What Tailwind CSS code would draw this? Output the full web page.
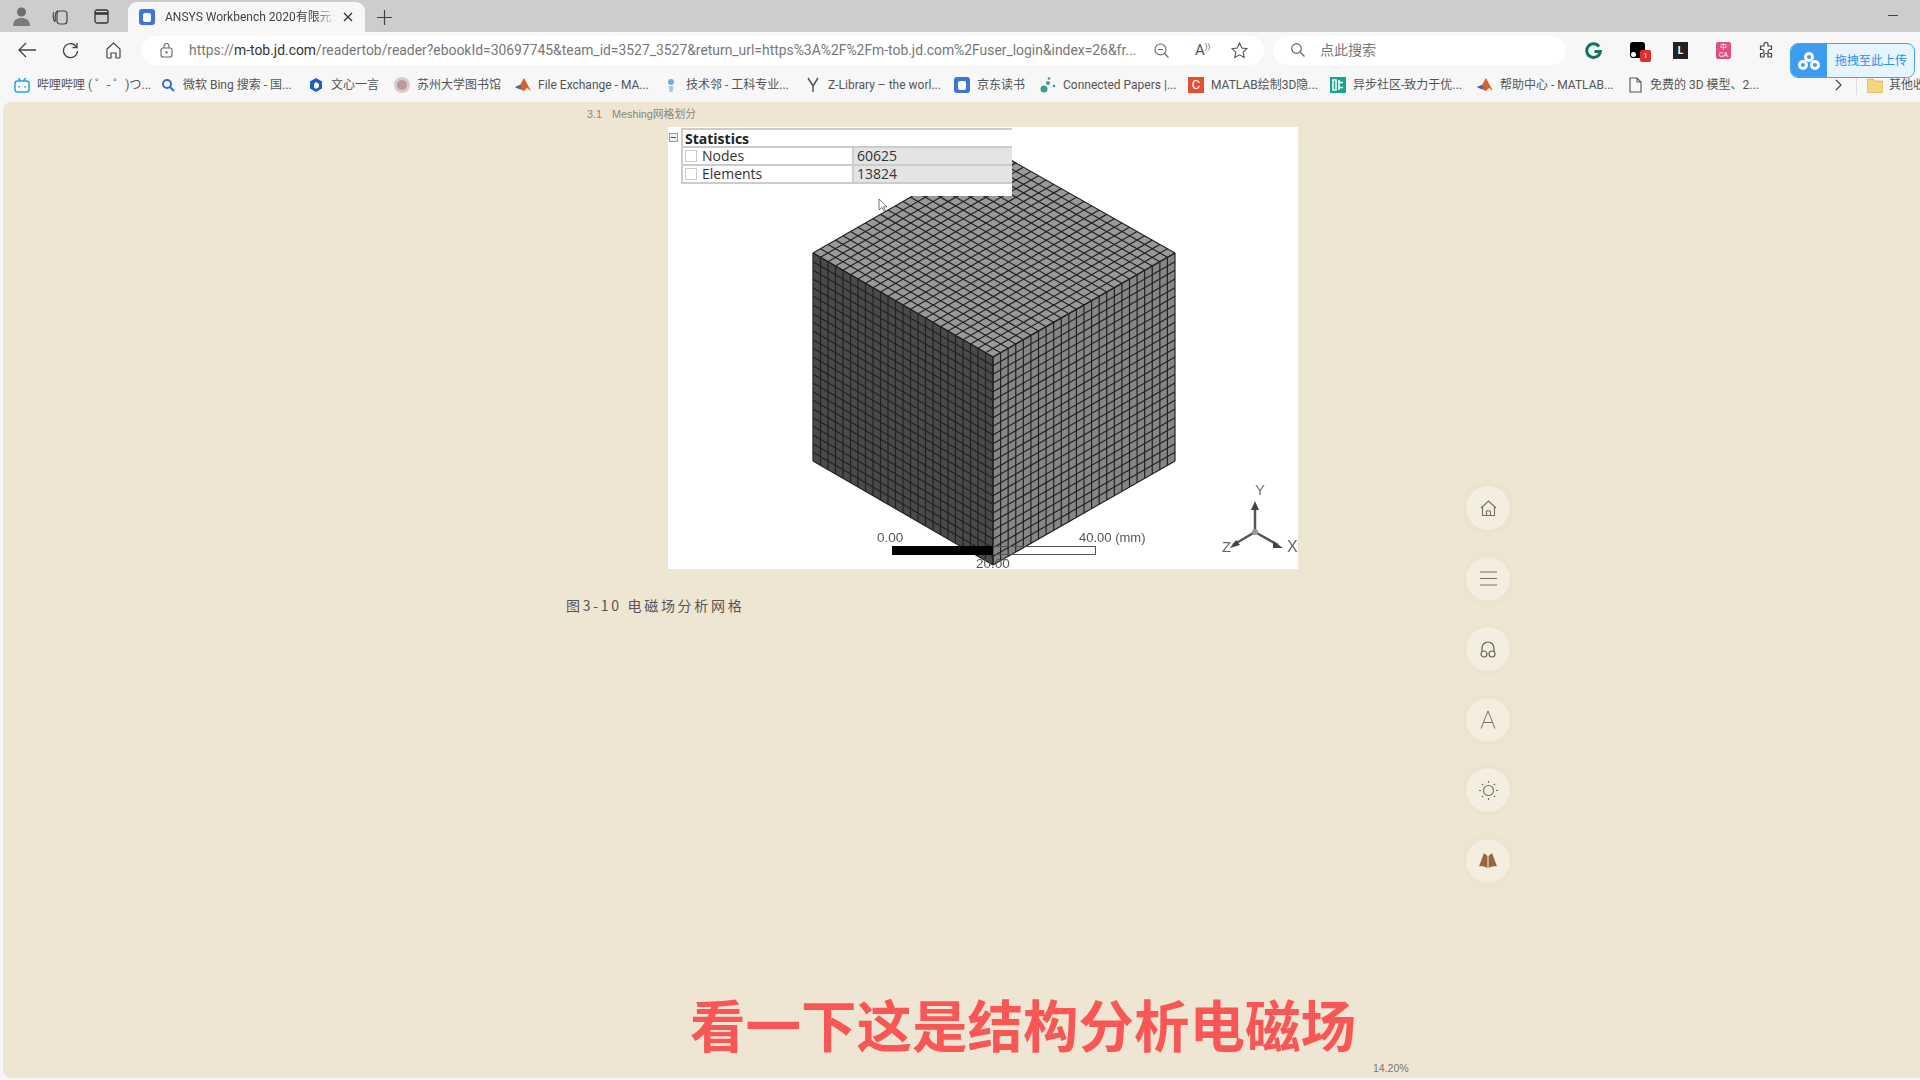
<!DOCTYPE html>
<html lang="zh">

<head>
  <meta charset="UTF-8">
  <title>ANSYS Workbench 2020</title>
  <script src="https://cdn.jsdelivr.net/npm/@tailwindcss/browser@4"></script>
</head>

<body class="w-[1920px] h-[1080px] overflow-hidden bg-[#f7f7f7] font-['Roboto','Noto_Sans_CJK_SC',sans-serif] text-[#444] relative">

  <!-- tab strip -->
  <div class="h-[32px] bg-[#cdcdcd] flex items-end relative">
    <div class="w-[128px] h-[32px] flex items-center text-[#444] shrink-0">
      <svg class="ml-[12px] w-[19px] h-[20px]" viewBox="0 0 19 20"><circle cx="9.5" cy="6" r="4.5" fill="#6f6f6f"/><path d="M1 20c0-6 4-8 8.500-8s8.500 2 8.500 8z" fill="#7b7b7b"/></svg>
      <svg class="ml-[20px] w-[17px] h-[17px]" viewBox="0 0 17 17" fill="none" stroke="#444" stroke-width="1.200"><rect x="6" y="3" width="10" height="13" rx="3"/><path d="M4 14C2 12 1.500 6 3 4M7 2.500C5 3 3.500 7 4.500 13"/></svg>
      <svg class="ml-[26px] w-[15px] h-[15px]" viewBox="0 0 15 15" fill="none" stroke="#333" stroke-width="1.300"><rect x="1" y="1" width="13" height="13" rx="2"/><path d="M1 4.500h13" stroke-width="2.500"/></svg>
    </div>
    <div class="w-[237px] h-[30px] bg-[#f7f7f7] rounded-t-[9px] flex items-center pl-[11px] shrink-0">
      <span class="w-[16px] h-[16px] rounded-[3px] bg-[#3f74d8] flex items-center justify-center shrink-0"><span class="w-[8px] h-[9px] bg-white rounded-[2px]"></span></span>
      <span class="ml-[10px] w-[171px] text-[12px] whitespace-nowrap overflow-hidden [mask-image:linear-gradient(to_right,black_88%,transparent)]">ANSYS Workbench 2020有限元分</span>
      <svg class="ml-[7px] w-[10px] h-[10px]" viewBox="0 0 10 10" stroke="#333" stroke-width="1.300"><path d="M1 1l8 8M9 1l-8 8"/></svg>
    </div>
    <svg class="ml-[12px] mb-[7px] w-[15px] h-[15px]" viewBox="0 0 15 15" stroke="#444" stroke-width="1.200"><path d="M7.500 0v15M0 7.500h15"/></svg>
    <span class="absolute left-[1888px] top-[15px] w-[10px] h-px bg-[#444]"></span>
  </div>

  <!-- toolbar -->
  <div class="h-[36px] flex items-center">
    <div class="w-[142px] flex items-center shrink-0">
      <svg class="ml-[18px] w-[18px] h-[16px]" viewBox="0 0 18 16" fill="none" stroke="#444" stroke-width="1.300"><path d="M18 8H1M8 1L1 8l7 7"/></svg>
      <svg class="ml-[26px] w-[17px] h-[17px]" viewBox="0 0 17 17" fill="none" stroke="#444" stroke-width="1.300"><path d="M14.500 5A7 7 0 1 0 15.500 9"/><path d="M15 1v4.500h-4.500"/></svg>
      <svg class="ml-[26px] w-[17px] h-[17px]" viewBox="0 0 17 17" fill="none" stroke="#444" stroke-width="1.200"><path d="M2 7l6.500-6L15 7v8a1 1 0 0 1-1 1h-3v-5H6v5H3a1 1 0 0 1-1-1z"/></svg>
    </div>
    <div class="w-[1122px] h-[29px] bg-white rounded-full flex items-center pl-[18px] shrink-0">
      <svg class="w-[13px] h-[15px] shrink-0" viewBox="0 0 13 15" fill="none" stroke="#666" stroke-width="1.100"><rect x="1" y="5" width="11" height="9" rx="2"/><path d="M4 5V3a2.500 2.500 0 0 1 5 0v2"/><circle cx="6.500" cy="9.500" r=".6" fill="#666"/></svg>
      <span class="ml-[16px] w-[948px] text-[13.900px] text-[#777] whitespace-nowrap shrink-0">https://<span class="text-[#333]">m-tob.jd.com</span>/readertob/reader?ebookId=30697745&amp;team_id=3527_3527&amp;return_url=https%3A%2F%2Fm-tob.jd.com%2Fuser_login&amp;index=26&amp;fr...</span>
      <svg class="ml-[17px] w-[15px] h-[15px] shrink-0" viewBox="0 0 15 15" fill="none" stroke="#666" stroke-width="1.100"><circle cx="6.500" cy="6.500" r="5.500"/><path d="M10.500 10.500L14.500 14.500M4 6.500h5"/></svg>
      <span class="ml-[26px] text-[15px] text-[#555] leading-none shrink-0">A<span class="text-[8px] align-top">))</span></span>
      <svg class="ml-[21px] w-[17px] h-[17px] shrink-0" viewBox="0 0 17 17" fill="none" stroke="#555" stroke-width="1.100"><path d="M8.500 1l2.300 5 5.200.6-3.900 3.600 1.100 5.300-4.700-2.700-4.700 2.700 1.100-5.300L1 6.600l5.200-.6z"/></svg>
    </div>
    <div class="ml-[9px] w-[293px] h-[29px] bg-white rounded-full flex items-center pl-[18px] shrink-0">
      <svg class="w-[14px] h-[14px]" viewBox="0 0 14 14" fill="none" stroke="#666" stroke-width="1.200"><circle cx="5.500" cy="5.500" r="4.800"/><path d="M9 9l4.500 4.500"/></svg>
      <span class="ml-[15px] text-[14px] text-[#777]">点此搜索</span>
    </div>
    <div class="ml-[19px] flex items-center">
      <svg class="w-[17px] h-[17px]" viewBox="0 0 17 17" fill="none" stroke="#11745f" stroke-width="3"><path d="M14 4.500A6.800 6.800 0 1 0 15.300 9.500H9.500"/></svg>
      <span class="ml-[28px] relative w-[15px] h-[16px] bg-black rounded-[3px]">
        <span class="absolute left-[1px] bottom-[1px] w-[5px] h-[5px] rounded-full bg-white"></span>
        <span class="absolute -right-[6px] top-[8px] w-[11px] h-[12px] rounded-[2px] bg-[#e22b2b] text-white text-[8px] leading-[12px] text-center">1</span>
      </span>
      <span class="ml-[28px] w-[15px] h-[17px] bg-[#222] text-white text-[10px] font-bold leading-[17px] text-center">L</span>
      <span class="ml-[28px] w-[15px] h-[17px] rounded-[2px] bg-[#de4f82] text-white text-[7px] leading-[8px] text-center pt-[1px]">中<br>CA</span>
      <svg class="ml-[27px] w-[16px] h-[16px]" viewBox="0 0 16 16" fill="none" stroke="#444" stroke-width="1.200"><path d="M6 2.500a2 2 0 0 1 4 0V4h3.500v3.500H12a2 2 0 0 0 0 4h1.500V15H10v-1.500a2 2 0 0 0-4 0V15H2.500v-3.500H4a2 2 0 0 0 0-4H2.500V4H6z"/></svg>
    </div>
  </div>

  <!-- bookmarks bar -->
  <div class="h-[34px] flex items-center pl-[14px] text-[12px] whitespace-nowrap text-[#555] overflow-hidden">
    <div class="w-[146px] shrink-0 flex items-center gap-[7px]">
      <svg class="w-[16px] h-[15px]" viewBox="0 0 16 15" fill="none" stroke="#2aa6dc" stroke-width="1.500"><rect x="1" y="3" width="14" height="11" rx="2.500"/><path d="M4.500 0l2 3M11.500 0l-2 3M5 8v1.500M11 8v1.500"/></svg>
      <span>哔哩哔哩 ( ゜- ゜)つ...</span>
    </div>
    <div class="w-[148px] shrink-0 flex items-center gap-[7px]">
      <svg class="w-[16px] h-[14px]" viewBox="0 0 16 14" fill="none" stroke="#2d6fd0" stroke-width="2"><circle cx="7" cy="6" r="4"/><path d="M10 9l4 4"/></svg>
      <span>微软 Bing 搜索 - 国...</span>
    </div>
    <div class="w-[86px] shrink-0 flex items-center gap-[7px]">
      <svg class="w-[16px] h-[16px]" viewBox="0 0 16 16"><path d="M8 1l6 3.500v7L8 15l-6-3.500v-7z" fill="#1e5ec8"/><path d="M8 5l3 2v3l-3 2-2-1.500V7z" fill="#fff"/></svg>
      <span>文心一言</span>
    </div>
    <div class="w-[121px] shrink-0 flex items-center gap-[7px]">
      <span class="w-[16px] h-[16px] rounded-full bg-[#b99a9c] border-[3px] border-[#d9c9c9]"></span>
      <span>苏州大学图书馆</span>
    </div>
    <div class="w-[148px] shrink-0 flex items-center gap-[7px]">
      <svg class="w-[16px] h-[16px]" viewBox="0 0 16 16"><path d="M0 10l5-2 4-7 7 13-4-3-3 3z" fill="#d8622a"/><path d="M0 10l5-2 2 3-3 1z" fill="#3a6ea5"/></svg>
      <span>File Exchange - MA...</span>
    </div>
    <div class="w-[142px] shrink-0 flex items-center gap-[7px]">
      <svg class="w-[16px] h-[16px]" viewBox="0 0 16 16"><circle cx="8" cy="5" r="3" fill="#7fa9dc"/><path d="M5.500 9h5l-1 6h-3z" fill="#a9c5e8"/></svg>
      <span>技术邻 - 工科专业...</span>
    </div>
    <div class="w-[149px] shrink-0 flex items-center gap-[7px]">
      <svg class="w-[16px] h-[16px]" viewBox="0 0 16 16" fill="none" stroke="#555" stroke-width="1.500"><path d="M3 1l5 8 5-8M8 9v6"/></svg>
      <span>Z-Library – the worl...</span>
    </div>
    <div class="w-[86px] shrink-0 flex items-center gap-[7px]">
      <span class="w-[16px] h-[16px] rounded-[3px] bg-[#3f74d8] flex items-center justify-center"><span class="w-[8px] h-[9px] bg-white rounded-[2px]"></span></span>
      <span>京东读书</span>
    </div>
    <div class="w-[148px] shrink-0 flex items-center gap-[7px]">
      <svg class="w-[16px] h-[16px]" viewBox="0 0 16 16" fill="#3d9a8f"><circle cx="4" cy="12" r="3.500"/><circle cx="8" cy="6" r="2"/><circle cx="9" cy="1.500" r="1.300"/><circle cx="14" cy="9" r="1.300"/></svg>
      <span>Connected Papers |...</span>
    </div>
    <div class="w-[142px] shrink-0 flex items-center gap-[7px]">
      <span class="w-[16px] h-[16px] bg-[#e4502c] text-white text-[13px] leading-[16px] text-center">C</span>
      <span>MATLAB绘制3D隐...</span>
    </div>
    <div class="w-[147px] shrink-0 flex items-center gap-[7px]">
      <svg class="w-[16px] h-[16px]" viewBox="0 0 16 16"><rect width="16" height="16" fill="#19a48c"/><path d="M9 3v10M9 5.500h4M9 10.500h4M3 3h3v10H3z" stroke="#fff" stroke-width="1.500" fill="none"/></svg>
      <span>异步社区-致力于优...</span>
    </div>
    <div class="w-[150px] shrink-0 flex items-center gap-[7px]">
      <svg class="w-[16px] h-[16px]" viewBox="0 0 16 16"><path d="M0 10l5-2 4-7 7 13-4-3-3 3z" fill="#d8622a"/><path d="M0 10l5-2 2 3-3 1z" fill="#3a6ea5"/></svg>
      <span>帮助中心 - MATLAB...</span>
    </div>
    <div class="w-[208px] shrink-0 flex items-center gap-[7px]">
      <svg class="w-[16px] h-[16px]" viewBox="0 0 16 16" fill="none" stroke="#555" stroke-width="1.100"><path d="M3 1h7l4 4v10H3zM10 1v4h4"/></svg>
      <span>免费的 3D 模型、2...</span>
    </div>
    <svg class="w-[8px] h-[12px] shrink-0" viewBox="0 0 8 12" fill="none" stroke="#444" stroke-width="1.200"><path d="M1 1l5 5-5 5"/></svg>
    <span class="ml-[13px] w-px h-[20px] bg-[#ddd] shrink-0"></span>
    <svg class="ml-[10px] w-[16px] h-[15px] shrink-0" viewBox="0 0 16 15"><path d="M0 2a1 1 0 0 1 1-1h5l2 2h7a1 1 0 0 1 1 1v10a1 1 0 0 1-1 1H1a1 1 0 0 1-1-1z" fill="#f5d67b" stroke="#b8953e" stroke-width=".5"/></svg>
    <span class="ml-[6px] shrink-0">其他收</span>
  </div>

  <!-- upload widget sits over the toolbar -->
  <div class="absolute left-[1790px] top-[43px] w-[125px] h-[35px] rounded-[8px] border border-[#4aa3ee] bg-[#e6f4fe] flex items-center overflow-hidden">
    <span class="w-[36px] h-full bg-[#3b9cf0] flex items-center justify-center shrink-0">
      <svg class="w-[22px] h-[18px]" viewBox="0 0 22 18" fill="none" stroke="#fff" stroke-width="3"><circle cx="11" cy="5" r="3.500"/><circle cx="5" cy="13" r="3.500"/><circle cx="17" cy="13" r="3.500"/></svg>
    </span>
    <span class="ml-[8px] text-[12px] text-[#2d8fe6] whitespace-nowrap">拖拽至此上传</span>
  </div>

  <!-- reader page -->
  <main class="relative ml-[3px] mb-[2px] h-[976px] bg-[#eee5d3] rounded-tl-[8px] rounded-bl-[8px]">
    <div class="pl-[584px] pt-[4px] h-[25px] text-[10.800px] text-[#8a877d] font-['Liberation_Sans','Noto_Sans_CJK_SC',sans-serif] whitespace-nowrap">3.1<span class="ml-[10px]">Meshing网格划分</span></div>

    <div class="relative ml-[665px] w-[630px] h-[442px] bg-white overflow-hidden">
      <svg id="mesh" class="block blur-[0.4px]" width="630" height="442" viewBox="668 127 630 442" font-family="'Liberation Sans',sans-serif" font-size="13.500" fill="#555">
        <polygon points="993,150 1175,253 993,357 813,253" fill="#999"/>
        <polygon points="813,253 993,357 993,565 813,461" fill="#4a4a4a"/>
        <polygon points="993,357 1175,253 1175,461 993,565" fill="#868686"/>
        <g id="meshLines" stroke="#222" stroke-width="1.200"></g>
        <text x="877" y="542">0.00</text>
        <text x="1079" y="542" font-size="13">40.00 (mm)</text>
        <rect x="892" y="546" width="101" height="9" fill="#000"/>
        <rect x="993.500" y="546.500" width="102" height="8" fill="none" stroke="#555"/>
        <text x="993" y="568" text-anchor="middle">20.00</text>
        <g stroke="#555" stroke-width="2.500" fill="#444">
          <path d="M1255 532V506M1255 532L1233 545M1255 532L1278 545" fill="none"/>
          <path d="M1251 510l4-9 4 9zM1240 545l-10 3 6-8zM1273 541l10 7-10 0z" stroke="none"/>
          <circle cx="1255" cy="532" r="3" fill="#999" stroke="none"/>
        </g>
        <text x="1255" y="495" font-size="15" fill="#777">Y</text>
        <text x="1222" y="552" font-size="15" fill="#666">Z</text>
        <text x="1287" y="552" font-size="16" fill="#666">X</text>
      </svg>

      <!-- statistics panel pasted on top of the figure -->
      <div class="absolute left-0 top-0 w-[344px] h-[69px] bg-white font-['Open_Sans',sans-serif] text-[14px] text-[#333]">
        <span class="absolute left-[1px] top-[6px] w-[9px] h-[9px] border border-[#999] bg-[#eee]"><span class="block mt-[3px] mx-[1px] h-px bg-[#555]"></span></span>
        <div class="absolute left-[13px] top-[1px] w-[331px] border-t-2 border-l-2 border-[#ccc]">
          <div class="h-[18px] pl-[2px] font-bold text-[#222] leading-[18px] border-b-2 border-[#ccc]">Statistics</div>
          <div class="h-[18px] flex leading-[16px] border-b-2 border-[#ccc]">
            <div class="w-[171px] flex items-center border-r-2 border-[#ccc]"><span class="ml-[2px] w-[12px] h-[12px] border border-[#ccc]"></span><span class="ml-[5px]">Nodes</span></div>
            <div class="flex-1 bg-[#e4e4e4] pl-[3px]">60625</div>
          </div>
          <div class="h-[18px] flex leading-[16px] border-b-2 border-[#ccc]">
            <div class="w-[171px] flex items-center border-r-2 border-[#ccc]"><span class="ml-[2px] w-[12px] h-[12px] border border-[#ccc]"></span><span class="ml-[5px]">Elements</span></div>
            <div class="flex-1 bg-[#e4e4e4] pl-[3px]">13824</div>
          </div>
        </div>
      </div>
      <svg class="absolute left-[210px] top-[71px] w-[10px] h-[15px]" viewBox="0 0 10 15" fill="#fff" stroke="#555" stroke-width=".8"><path d="M1 1v11l3-2.500 2 4 1.500-.7-2-4H9z"/></svg>
    </div>

    <p class="ml-[563px] mt-[26px] text-[14px] tracking-[2.700px] text-[#555] font-['Noto_Sans_CJK_SC',sans-serif] whitespace-nowrap">图3-10 电磁场分析网格</p>

    <!-- floating reader tools -->
    <div class="absolute left-[1463px] top-[384px] flex flex-col gap-[26.600px]">
      <button class="w-[44px] h-[44px] rounded-full bg-[#f4eee0] shadow-[0_0_8px_rgba(120,100,60,0.06)] flex items-center justify-center">
        <svg class="w-[17px] h-[17px]" viewBox="0 0 17 17" fill="none" stroke="#7c6f62" stroke-width="1.100"><path d="M1 8l7.500-7L16 8M2.500 7v8.500h12V7M6.500 15.500V11h4v4.500"/></svg>
      </button>
      <button class="w-[44px] h-[44px] rounded-full bg-[#f4eee0] shadow-[0_0_8px_rgba(120,100,60,0.06)] flex items-center justify-center">
        <svg class="w-[17px] h-[15px]" viewBox="0 0 17 15" stroke="#7c6f62" stroke-width="1.100"><path d="M0 1h17M0 7.500h17M0 14h17"/></svg>
      </button>
      <button class="w-[44px] h-[44px] rounded-full bg-[#f4eee0] shadow-[0_0_8px_rgba(120,100,60,0.06)] flex items-center justify-center">
        <svg class="w-[16px] h-[17px]" viewBox="0 0 16 17" fill="none" stroke="#6f6257" stroke-width="1.200"><path d="M2 11V7a6 6 0 0 1 12 0v4"/><rect x="1" y="10" width="6" height="6" rx="3"/><rect x="9" y="10" width="6" height="6" rx="3"/></svg>
      </button>
      <button class="w-[44px] h-[44px] rounded-full bg-[#f4eee0] shadow-[0_0_8px_rgba(120,100,60,0.06)] flex items-center justify-center">
        <svg class="w-[16px] h-[19px]" viewBox="0 0 16 19" fill="none" stroke="#7c6f62" stroke-width="1"><path d="M1 18.500L8 1l7 17.500M3.500 12.500h9"/></svg>
      </button>
      <button class="w-[44px] h-[44px] rounded-full bg-[#f4eee0] shadow-[0_0_8px_rgba(120,100,60,0.06)] flex items-center justify-center">
        <svg class="w-[19px] h-[19px]" viewBox="0 0 19 19" fill="none" stroke="#7c6f62" stroke-width="1.100"><circle cx="9.500" cy="9.500" r="5"/><path d="M9.500 0v2M9.500 17v2M0 9.500h2M17 9.500h2M2.800 2.800l1.400 1.400M14.800 14.800l1.400 1.400M2.800 16.200l1.400-1.400M14.800 4.200l1.400-1.400"/></svg>
      </button>
      <button class="w-[44px] h-[44px] rounded-full bg-[#f4eee0] shadow-[0_0_8px_rgba(120,100,60,0.06)] flex items-center justify-center">
        <svg class="w-[18px] h-[16px]" viewBox="0 0 18 16" fill="#94663f"><path d="M5 0l3.500 3v12C6 13.500 3 13 0 13.500zM13 0L9.500 3v12c2.500-1.500 5.500-2 8.500-1.500z"/></svg>
      </button>
    </div>

    <p class="absolute left-[687px] top-[883px] text-[55.500px] leading-[76px] font-bold text-[#f95656] whitespace-nowrap font-['Noto_Sans_CJK_SC',sans-serif]">看一下这是结构分析电磁场</p>
    <span class="absolute left-[1370px] top-[959px] text-[10.500px] text-[#777] font-['Liberation_Sans',sans-serif]">14.20%</span>
  </main>

  <script>
    // 13824 = 24^3 cells, so each visible face of the cube is a 24 x 24 grid
    const meshLines = document.getElementById("meshLines");

    function addFaceGrid(a, b, c, d) {
      for (let i = 0; i <= 24; i++) {
        const t = i / 24;
        addLine(lerp(a, b, t), lerp(d, c, t));
        addLine(lerp(a, d, t), lerp(b, c, t));
      }
    }

    function lerp(p, q, t) {
      return [p[0] + (q[0] - p[0]) * t, p[1] + (q[1] - p[1]) * t];
    }

    function addLine(p, q) {
      const line = document.createElementNS("http://www.w3.org/2000/svg", "line");
      line.setAttribute("x1", p[0]);
      line.setAttribute("y1", p[1]);
      line.setAttribute("x2", q[0]);
      line.setAttribute("y2", q[1]);
      meshLines.appendChild(line);
    }

    addFaceGrid([993, 150], [1175, 253], [993, 357], [813, 253]);
    addFaceGrid([813, 253], [993, 357], [993, 565], [813, 461]);
    addFaceGrid([993, 357], [1175, 253], [1175, 461], [993, 565]);
  </script>
</body>

</html>
